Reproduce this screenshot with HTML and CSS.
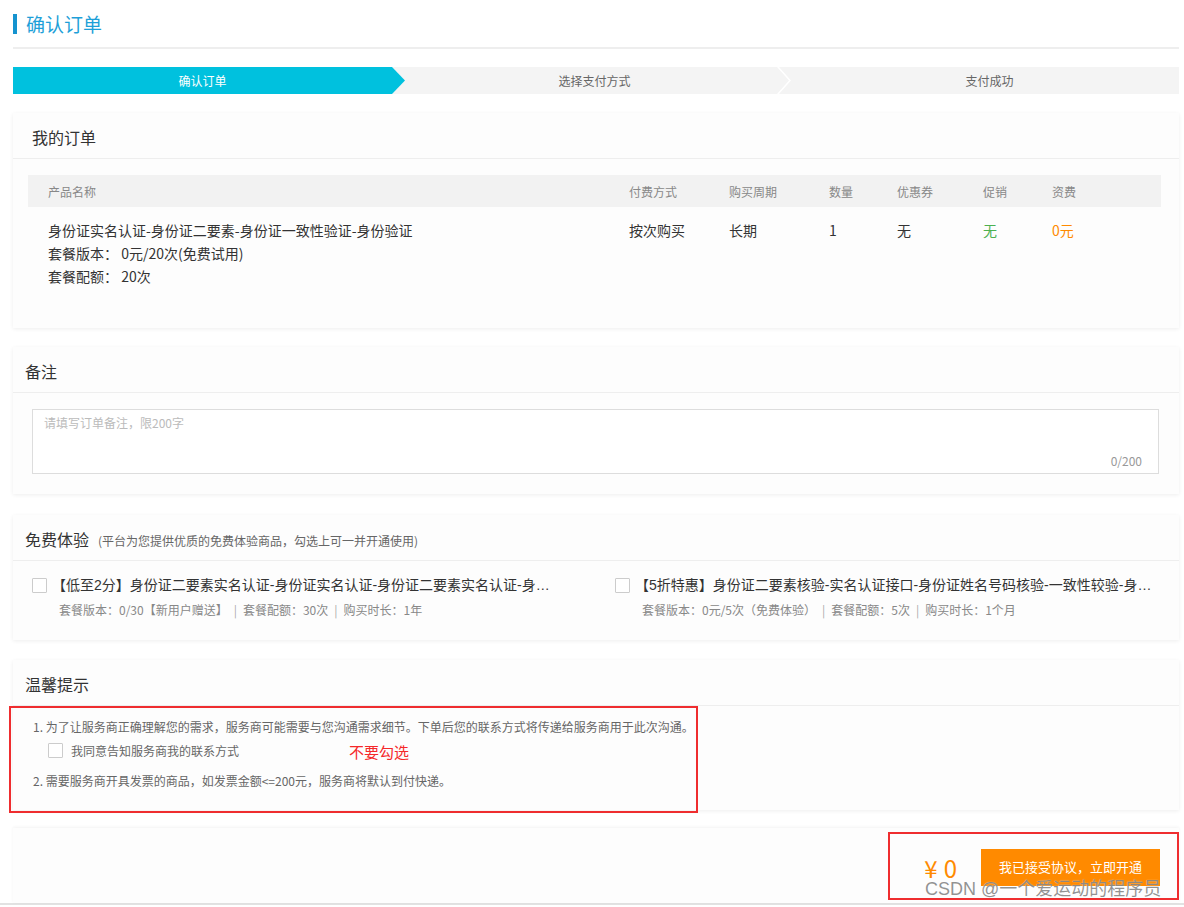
FILE: index.html
```html
<!DOCTYPE html>
<html lang="zh-CN">
<head>
<meta charset="utf-8">
<title>确认订单</title>
<link rel="stylesheet" href="styles.css">
</head>
<body>
<div class="page">
  <div class="page-title"><span class="title-bar"></span><h1 class="title-text">确认订单</h1></div>

  <div class="steps">
    <div class="step active">确认订单</div>
    <div class="step sep">选择支付方式</div>
    <div class="step last">支付成功</div>
  </div>

  <section class="card order-card">
    <div class="card-head wide-pad">我的订单</div>
    <div class="card-body order-body">
      <div class="order-table">
        <div class="t-grid thead">
          <div class="cell">产品名称</div>
          <div class="cell">付费方式</div>
          <div class="cell">购买周期</div>
          <div class="cell">数量</div>
          <div class="cell">优惠券</div>
          <div class="cell">促销</div>
          <div class="cell">资费</div>
        </div>
        <div class="t-grid trow">
          <div class="cell">
            <div>身份证实名认证-身份证二要素-身份证一致性验证-身份验证</div>
            <div>套餐版本：&nbsp;0元/20次(免费试用)</div>
            <div>套餐配额：&nbsp;20次</div>
          </div>
          <div class="cell">按次购买</div>
          <div class="cell">长期</div>
          <div class="cell">1</div>
          <div class="cell">无</div>
          <div class="cell green">无</div>
          <div class="cell orange">0元</div>
        </div>
      </div>
    </div>
  </section>

  <section class="card remark-card">
    <div class="card-head">备注</div>
    <div class="card-body remark-body">
      <div class="remark-box">
        <span class="placeholder">请填写订单备注，限200字</span>
        <span class="counter">0/200</span>
      </div>
    </div>
  </section>

  <section class="card trial-card">
    <div class="card-head">免费体验<span class="head-note">(平台为您提供优质的免费体验商品，勾选上可一并开通使用)</span></div>
    <div class="card-body trial-body">
      <div class="trial">
        <span class="cb"></span>
        <div class="trial-info">
          <div class="trial-title">【低至2分】身份证二要素实名认证-身份证实名认证-身份证二要素实名认证-身份证实名认证</div>
          <div class="trial-sub">套餐版本：0/30【新用户赠送】<span class="sep-bar">|</span>套餐配额：30次<span class="sep-bar">|</span>购买时长：1年</div>
        </div>
      </div>
      <div class="trial">
        <span class="cb"></span>
        <div class="trial-info">
          <div class="trial-title wide">【5折特惠】身份证二要素核验-实名认证接口-身份证姓名号码核验-一致性较验-身份证实名</div>
          <div class="trial-sub">套餐版本：0元/5次（免费体验）<span class="sep-bar">|</span>套餐配额：5次<span class="sep-bar">|</span>购买时长：1个月</div>
        </div>
      </div>
    </div>
  </section>

  <section class="card tips-card">
    <div class="card-head">温馨提示</div>
    <div class="card-body tips-body">
      <p class="tip">1. 为了让服务商正确理解您的需求，服务商可能需要与您沟通需求细节。下单后您的联系方式将传递给服务商用于此次沟通。</p>
      <div class="agree-row"><span class="cb"></span><span class="agree-label">我同意告知服务商我的联系方式</span><span class="note-red">不要勾选</span></div>
      <p class="tip tip2">2. 需要服务商开具发票的商品，如发票金额&lt;=200元，服务商将默认到付快递。</p>
    </div>
    <div class="mark-box mark-tips"></div>
  </section>

  <section class="card pay-card">
    <span class="price"><span class="yen">¥</span>0</span>
    <button class="pay-btn">我已接受协议，立即开通</button>
    <div class="mark-box mark-pay"></div>
    <span class="watermark">CSDN @一个爱运动的程序员</span>
  </section>
</div>
<div class="bottom-line"></div>
</body>
</html>
```

FILE: styles.css
```css
* { box-sizing: border-box; }

html, body {
  margin: 0;
  padding: 0;
  background: #fff;
}

body {
  font-family: "Noto Sans CJK SC", "Microsoft YaHei", "Liberation Sans", sans-serif;
  color: #333;
  overflow: hidden;
}

.page {
  width: 1179px;
  padding-left: 13px;
}

/* title */
.page-title {
  display: flex;
  align-items: center;
  padding-top: 14px;
  padding-bottom: 13px;
  border-bottom: 2px solid #eeeeee;
}
.title-bar {
  width: 4px;
  height: 20px;
  background: #1593cf;
  margin-right: 9px;
}
.title-text {
  margin: 0;
  font-size: 19px;
  line-height: 20px;
  font-weight: normal;
  color: #1e9fd8;
}

/* steps */
.steps {
  display: flex;
  height: 27px;
  margin-top: 18px;
  margin-bottom: 19px;
  background: #f4f4f4;
}
.step {
  flex: 1;
  position: relative;
  display: flex;
  align-items: center;
  justify-content: center;
  font-size: 12px;
  color: #666;
}
.step.active {
  background: #00c1de;
  color: #fff;
  padding-right: 13px;
  clip-path: polygon(0 0, calc(100% - 13px) 0, 100% 50%, calc(100% - 13px) 100%, 0 100%);
}
.step.sep::after {
  content: "";
  position: absolute;
  top: 0;
  bottom: 0;
  right: -7px;
  width: 14px;
  background: #fff;
  z-index: 1;
  clip-path: polygon(0 0, 2px 0, 14px 50%, 2px 100%, 0 100%, 12px 50%);
}
.step.last {
  padding-left: 16px;
}

/* cards */
.card {
  position: relative;
  background: #fdfdfd;
  box-shadow: 0 1px 4px rgba(0, 0, 0, 0.07);
}
.order-card { margin-bottom: 19px; }
.remark-card { margin-bottom: 21px; }
.trial-card { margin-bottom: 20px; }
.tips-card { margin-bottom: 18px; }

.card-head {
  height: 46px;
  padding-top: 13px;
  padding-left: 12px;
  font-size: 16px;
  line-height: 22px;
  color: #333;
  border-bottom: 1px solid #eeeeee;
}
.card-head.wide-pad {
  padding-left: 19px;
}
.head-note {
  font-size: 12px;
  color: #666;
  margin-left: 9px;
}

/* order table */
.order-body {
  padding: 16px 18px 40px 15px;
}
.t-grid {
  display: grid;
  grid-template-columns: 581px 100px 100px 68px 86px 69px 1fr;
}
.cell {
  padding-left: 20px;
}
.thead {
  height: 32px;
  align-items: center;
  background: #f2f2f2;
  font-size: 12px;
  color: #888;
}
.trow {
  padding-top: 12px;
  font-size: 14px;
  line-height: 23px;
  color: #333;
}
.green { color: #4cb050; }
.orange { color: #ff8a00; }

/* remark */
.remark-body {
  padding: 16px 20px 20px 19px;
}
.remark-box {
  height: 65px;
  border: 1px solid #dddddd;
  background: #fff;
  display: flex;
  flex-direction: column;
  justify-content: space-between;
  padding: 4px 16px 3px 11px;
  font-size: 12px;
  line-height: 18px;
}
.placeholder { color: #bbbbbb; }
.counter { color: #999; align-self: flex-end; }

/* free trial */
.trial-body {
  display: grid;
  grid-template-columns: 583px 1fr;
  padding: 13px 18px 20px 19px;
}
.trial {
  display: flex;
  align-items: flex-start;
}
.cb {
  flex: none;
  width: 15px;
  height: 15px;
  border: 1px solid #cccccc;
  background: #fff;
  border-radius: 1px;
}
.trial .cb {
  margin-top: 4px;
  margin-right: 5px;
}
.trial-title {
  width: 510px;
  white-space: nowrap;
  overflow: hidden;
  text-overflow: ellipsis;
  font-family: "Liberation Sans", "Noto Sans CJK SC", sans-serif;
  font-size: 14px;
  line-height: 22px;
  color: #333;
}
.trial-title.wide {
  width: 530px;
}
.trial-sub {
  margin-top: 4px;
  padding-left: 7px;
  font-size: 12px;
  line-height: 20px;
  color: #888;
}
.sep-bar {
  color: #aaa;
  margin: 0 6px;
}

/* tips */
.tips-body {
  padding: 11px 20px 19px 20px;
}
.tip {
  margin: 0;
  font-size: 12px;
  line-height: 20px;
  color: #666;
}
.tip2 {
  margin-top: 11px;
}
.agree-row {
  display: flex;
  align-items: center;
  height: 20px;
  margin-top: 3px;
  padding-left: 15px;
  font-size: 12px;
  color: #666;
}
.agree-row .cb {
  margin-right: 8px;
}
.note-red {
  margin-left: 110px;
  margin-top: 3px;
  font-size: 15px;
  color: #f5282a;
}

/* pay bar */
.pay-card {
  height: 75px;
  display: flex;
  justify-content: flex-end;
  align-items: flex-start;
  gap: 24px;
  padding-top: 21px;
  padding-right: 19px;
  box-shadow: 0 -1px 3px rgba(0, 0, 0, 0.05);
}
.price {
  font-size: 24px;
  line-height: 37px;
  color: #ff8a00;
}
.yen {
  margin-right: 6px;
}
.pay-btn {
  width: 179px;
  height: 37px;
  border: none;
  background: #ff8a00;
  color: #fff;
  font-family: inherit;
  font-size: 13px;
  padding: 0 0 2px 0;
}

/* annotation overlays */
.mark-box {
  position: absolute;
  border: 2px solid #ef2d2f;
  pointer-events: none;
}
.mark-tips {
  left: -4px;
  top: 46px;
  width: 689px;
  height: 107px;
}
.mark-pay {
  left: 875px;
  top: 4px;
  width: 291px;
  height: 68px;
}
.watermark {
  position: absolute;
  left: 912px;
  top: 50px;
  font-family: "Liberation Sans", "Noto Sans CJK SC", sans-serif;
  font-size: 18px;
  line-height: 22px;
  color: rgba(110, 110, 110, 0.75);
  text-shadow: 0 0 1px rgba(255, 255, 255, 0.8);
  white-space: nowrap;
}

.bottom-line {
  height: 2px;
  background: #e2e2e2;
}
```
